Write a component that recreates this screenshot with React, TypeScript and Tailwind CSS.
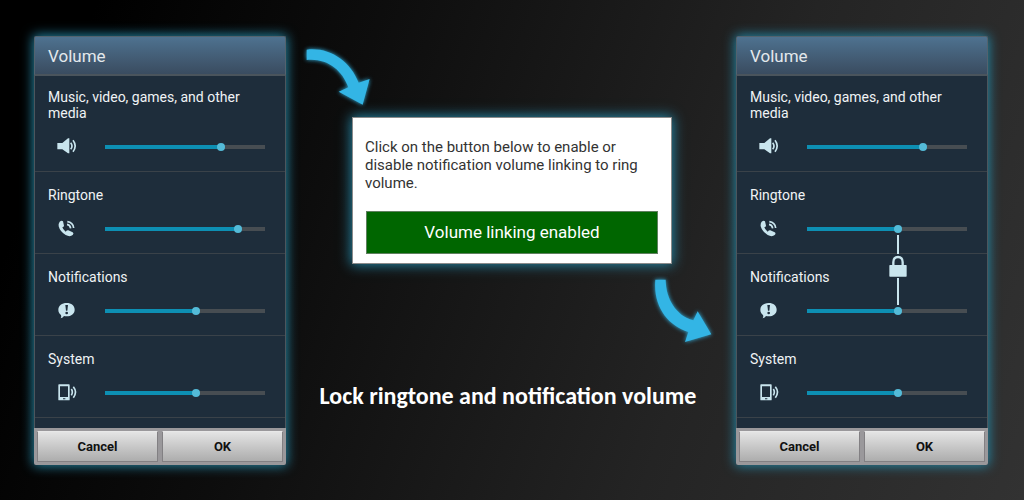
import { useState, type ReactNode } from "react";

type Channel = {
  id: string;
  label: string;
  icon: ReactNode;
  value: number;
};

function SpeakerIcon() {
  return (
    <svg viewBox="36 36 60 60" className="size-5 shrink-0" aria-hidden="true">
      <path d="M37 54h15l17-14h4v45h-4L52 73H37z" fill="#c9e5ee" />
      <path
        d="M77 53q8 10 0 20M84 46q13 17 0 34"
        fill="none"
        stroke="#c9e5ee"
        strokeWidth="5"
      />
    </svg>
  );
}

function CallIcon() {
  return (
    <svg viewBox="36 27 60 60" className="size-5 shrink-0" aria-hidden="true">
      <path
        d="M44 35q6-5 10-1l3 13q0 3-5 5q2 7 10 13q4-5 8-4l13 6q5 3 0 8q-8 7-21 0Q45 65 41 49q-1-9 3-14z"
        fill="#c9e5ee"
      />
      <path
        d="M66 43q9 1 11 12M67 35q17 2 19 19"
        fill="none"
        stroke="#c9e5ee"
        strokeWidth="5"
      />
    </svg>
  );
}

function AlertIcon() {
  return (
    <svg viewBox="36 273 60 60" className="size-5 shrink-0" aria-hidden="true">
      <path
        d="M65 279c14 0 24 8 24 20s-10 20-24 20q-5 0-8-1q-3 6-10 7q3-5 1-10c-5-4-8-9-8-16c0-12 11-20 25-20z"
        fill="#c9e5ee"
      />
      <path d="M61 285h8l-2 17h-4z" fill="#1e2d3b" />
      <circle cx="65" cy="309" r="4" fill="#1e2d3b" />
    </svg>
  );
}

function DeviceIcon() {
  return (
    <svg viewBox="36 26 60 60" className="size-5 shrink-0" aria-hidden="true">
      <path
        d="M42 30h30q2 0 2 2v44q0 2-2 2H42q-2 0-2-2V32q0-2 2-2zm3 6v32h24V36zm9 36v3h7v-3z"
        fill="#c9e5ee"
        fillRule="evenodd"
      />
      <path
        d="M79 44q6 9 0 19M85 37q13 16 0 33"
        fill="none"
        stroke="#c9e5ee"
        strokeWidth="5"
      />
    </svg>
  );
}

function LockLink() {
  return (
    <div className="pointer-events-none absolute top-[10px] left-[57%] flex -translate-x-1/2 flex-col items-center">
      <span className="h-[19px] w-[2px] bg-[#c9e5ee]" />
      <svg viewBox="0 0 54 72" className="h-6 w-[18px]" aria-hidden="true">
        <path
          d="M13 38V25q0-16 14-16t14 16v13"
          fill="none"
          stroke="#c9e5ee"
          strokeWidth="7"
        />
        <rect x="1" y="33" width="52" height="35" rx="2" fill="#c9e5ee" />
      </svg>
      <span className="h-[27px] w-[2px] bg-[#c9e5ee]" />
    </div>
  );
}

function VolumeRow({
  channel,
  prefix,
  linked,
}: {
  channel: Channel;
  prefix: string;
  linked?: boolean;
}) {
  const [value, setValue] = useState(channel.value);
  const inputId = `${prefix}-${channel.id}`;

  return (
    <div className="border-b border-[#3a4249] pt-[15px] pr-5 pb-[14px] pl-[13px] first:pt-[13px]">
      <label
        htmlFor={inputId}
        className="block text-sm leading-4 text-[#f0f3f5]"
      >
        {channel.label}
      </label>
      <div className="mt-4 flex items-center gap-7 pl-[9px]">
        {channel.icon}
        <div className="relative flex flex-1">
          <input
            id={inputId}
            type="range"
            min={0}
            max={100}
            value={value}
            onChange={(e) => setValue(Number(e.target.value))}
            className="h-2 w-full min-w-0 appearance-none bg-[length:100%_4px] bg-center bg-no-repeat [&::-webkit-slider-thumb]:size-2 [&::-webkit-slider-thumb]:appearance-none [&::-webkit-slider-thumb]:rounded-full [&::-webkit-slider-thumb]:bg-[#54bbd8]"
            style={{
              backgroundImage: `linear-gradient(to right, #0d8fb3 ${value}%, #474d52 ${value}%)`,
            }}
          />
          {linked && <LockLink />}
        </div>
      </div>
    </div>
  );
}

function VolumeDialog({
  prefix,
  channels,
  linkedId,
}: {
  prefix: string;
  channels: Channel[];
  linkedId?: string;
}) {
  return (
    <section className="w-[252px] shrink-0 rounded-xs bg-[#1e2d3b] shadow-[0_0_12px_1px_#2587a6]">
      <h2 className="rounded-t-xs border border-b-2 border-[#53636e] border-b-[#4a545c] bg-linear-to-b from-[#4e7290] to-[#3a4c60] px-[13px] pt-[7px] pb-[6px] text-[17px] leading-6 text-[#e3e8ec]">
        Volume
      </h2>
      <div className="border-x border-[#4c565d] pb-[10px]">
        {channels.map((channel) => (
          <VolumeRow
            key={channel.id}
            channel={channel}
            prefix={prefix}
            linked={channel.id === linkedId}
          />
        ))}
      </div>
      <div className="grid grid-cols-2 gap-1 rounded-b-xs bg-[#9a989b] p-[3px]">
        {["Cancel", "OK"].map((text) => (
          <button
            key={text}
            type="button"
            className="border border-[#828083] border-t-[#e8e8e8] bg-linear-to-b from-[#e4e4e4] to-[#adadad] py-[6px] text-[13px] leading-[17px] font-bold text-[#111111]"
          >
            {text}
          </button>
        ))}
      </div>
    </section>
  );
}

const before: Channel[] = [
  {
    id: "media",
    label: "Music, video, games, and other media",
    icon: <SpeakerIcon />,
    value: 74,
  },
  { id: "ringtone", label: "Ringtone", icon: <CallIcon />, value: 85 },
  { id: "notifications", label: "Notifications", icon: <AlertIcon />, value: 57 },
  { id: "system", label: "System", icon: <DeviceIcon />, value: 57 },
];

const after = before.map((channel) =>
  channel.id === "ringtone" ? { ...channel, value: 57 } : channel
);

export default function App() {
  return (
    <main className="flex min-h-screen items-start justify-between bg-[linear-gradient(110deg,#000000_8%,#0d0d0d_32%,#242424_68%,#323232_100%)] pt-9 pr-9 pb-8 pl-[34px] font-['Roboto',sans-serif]">
      <VolumeDialog prefix="before" channels={before} />

      <div className="flex flex-1 flex-col items-center pt-[9px] pr-4 pl-[18px]">
        <svg
          viewBox="27 30 210 192"
          className="h-16 w-[70px] self-start drop-shadow-[0_0_2px_#33b5e5]"
          aria-hidden="true"
        >
          <path
            d="M35 44C105 36 165 78 191 143L224 132L203 209L131 170L160 157C141 104 96 69 35 75z"
            fill="#33b5e5"
          />
        </svg>

        <section className="mt-2 w-[320px] border border-[#8b8b8b] bg-white px-[13px] pt-5 pb-[9px] shadow-[0_0_12px_1px_#2587a6]">
          <p className="-ml-px text-[15px] leading-[18px] text-[#333333]">
            Click on the button below to enable or disable notification volume
            linking to ring volume.
          </p>
          <button
            type="button"
            className="mt-[19px] w-full border border-[#5f7f5f] bg-[#006600] py-2 text-[17px] leading-[25px] text-white"
          >
            Volume linking enabled
          </button>
        </section>

        <svg
          viewBox="30 30 210 210"
          className="mt-3 size-[70px] self-end drop-shadow-[0_0_2px_#33b5e5]"
          aria-hidden="true"
        >
          <path
            d="M46 41H77C78 98 107 148 160 163L173 136L214 205L135 228L145 198C84 178 39 122 46 41z"
            fill="#33b5e5"
          />
        </svg>

        <h1 className="mt-9 pr-2 font-['Carlito','Lato',sans-serif] text-2xl leading-7 font-bold whitespace-nowrap text-white">
          Lock ringtone and notification volume
        </h1>
      </div>

      <VolumeDialog prefix="after" channels={after} linkedId="ringtone" />
    </main>
  );
}
